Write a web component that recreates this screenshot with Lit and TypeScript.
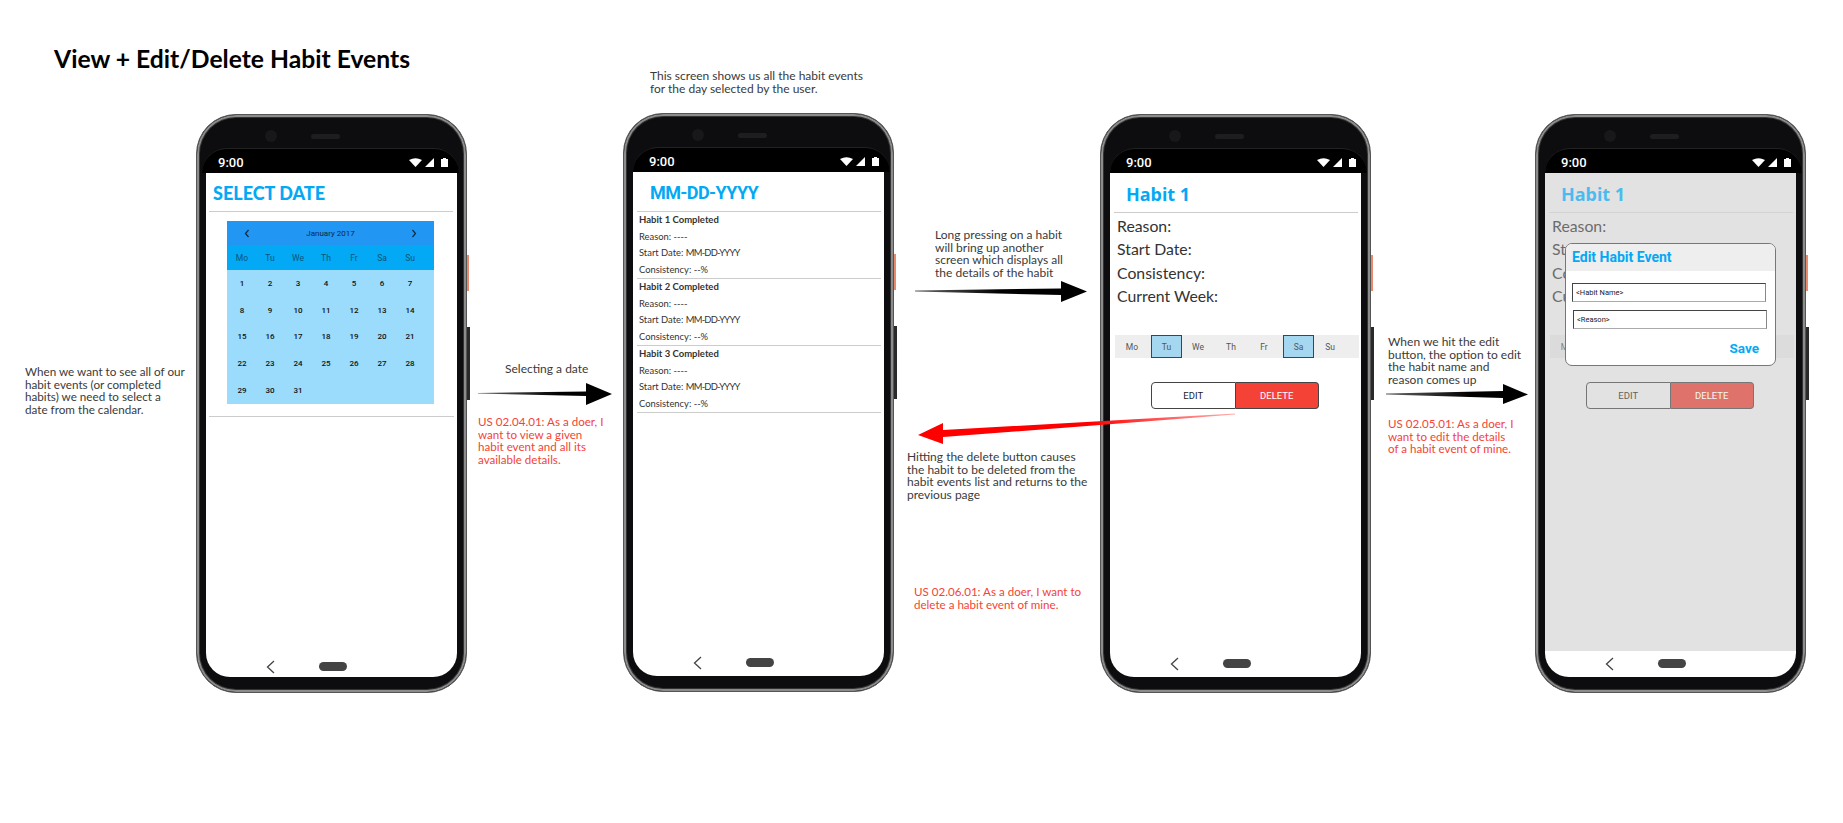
import { LitElement, html, css, svg } from "lit";
import { customElement, property } from "lit/decorators.js";

@customElement("phone-frame")
export class PhoneFrame extends LitElement {
  static override styles = css`
    :host {
      position: absolute;
      display: block;
      width: 271px;
      height: 579px;
    }
    .body {
      box-sizing: border-box;
      width: 100%;
      height: 100%;
      background: #0d0d0f;
      border: 1px solid #555;
      border-radius: 40px;
      box-shadow: inset 0 0 0 2px #8c8c8c, inset 0 0 0 3px #333;
      display: flex;
      flex-direction: column;
      overflow: hidden;
    }
    .sensors {
      height: 33px;
      flex: none;
      display: flex;
      align-items: flex-start;
      padding: 15px 0 0 68px;
      box-sizing: border-box;
    }
    .camera {
      width: 12px;
      height: 12px;
      border-radius: 50%;
      background: #18181b;
    }
    .speaker {
      width: 29px;
      height: 5px;
      margin: 4px 0 0 34px;
      border-radius: 3px;
      background: #1e1e21;
    }
    .status {
      width: 257px;
      height: 25px;
      flex: none;
      margin-left: 5px;
      background: #000;
      border-radius: 26px 26px 0 0;
      border-top: 1px solid #222;
      box-sizing: border-box;
      display: flex;
      align-items: center;
      padding: 2px 11px 0 16px;
      color: #fff;
      font: 500 13px Roboto, sans-serif;
    }
    .icons {
      margin-left: auto;
      display: flex;
      align-items: center;
      gap: 3px;
    }
    .battery {
      margin-left: 4px;
    }
    .screen {
      width: 251px;
      height: 504px;
      flex: none;
      margin-left: 9px;
      background: #fff;
      border-radius: 0 0 24px 24px;
      overflow: hidden;
      display: flex;
      flex-direction: column;
    }
    .shifted .status {
      margin-left: 9px;
    }
    .content {
      flex: 1;
      min-height: 0;
      position: relative;
      display: flex;
      flex-direction: column;
    }
    .nav {
      height: 26px;
      flex: none;
      display: flex;
      align-items: flex-start;
      padding: 11px 0 0 60px;
      box-sizing: border-box;
    }
    .shifted .nav {
      padding-top: 8px;
    }
    .pill {
      width: 28px;
      height: 9px;
      border-radius: 5px;
      background: #444;
      margin-left: 44px;
    }
    .chevron {
      margin-top: -2px;
    }
    .volume,
    .power {
      position: absolute;
      left: 271px;
    }
    .volume {
      top: 141px;
      width: 2px;
      height: 36px;
      background: #e98a6f;
    }
    .power {
      top: 213px;
      width: 3px;
      height: 73px;
      background: #2a2a2a;
    }
  `;

  @property({ type: Boolean }) shifted = false;

  override render() {
    return html`
      <div class="body ${this.shifted ? "shifted" : ""}">
        <div class="sensors">
          <span class="camera"></span><span class="speaker"></span>
        </div>
        <div class="status">
          9:00
          <div class="icons">
            <svg width="13" height="9" viewBox="0 0 13 9">
              <path d="M0 2Q6.5-1.6 13 2L6.5 9Z" fill="#fff" />
            </svg>
            <svg width="9" height="9" viewBox="0 0 9 9">
              <path d="M9 0V9H0Z" fill="#fff" />
            </svg>
            <svg class="battery" width="7" height="9" viewBox="0 0 7 9">
              <path d="M2 0H5V1H7V9H0V1H2Z" fill="#fff" />
            </svg>
          </div>
        </div>
        <div class="screen">
          <div class="content"><slot></slot></div>
          <div class="nav">
            <svg class="chevron" width="9" height="14" viewBox="0 0 9 14">
              <path d="M8 1L1.5 7L8 13" fill="none" stroke="#444" stroke-width="1.3" />
            </svg>
            <span class="pill"></span>
          </div>
        </div>
      </div>
      <span class="volume"></span><span class="power"></span>
    `;
  }
}

const WEEK = ["Mo", "Tu", "We", "Th", "Fr", "Sa", "Su"];
const DAYS = Array.from({ length: 31 }, (_, i) => i + 1);

const NOTES = [
  { x: 25, y: 365, cls: "tight", text: "When we want to see all of our\nhabit events (or completed\nhabits) we need to select a\ndate from the calendar." },
  { x: 650, y: 70, cls: "", text: "This screen shows us all the habit events\nfor the day selected by the user." },
  { x: 505, y: 363, cls: "", text: "Selecting a date" },
  { x: 478, y: 416, cls: "red", text: "US 02.04.01: As a doer, I\nwant to view a given\nhabit event and all its\navailable details." },
  { x: 935, y: 229, cls: "", text: "Long pressing on a habit\nwill bring up another\nscreen which displays all\nthe details of the habit" },
  { x: 907, y: 451, cls: "", text: "Hitting the delete button causes\nthe habit to be deleted from the\nhabit events list and returns to the\nprevious page" },
  { x: 914, y: 586, cls: "red", text: "US 02.06.01: As a doer, I want to\ndelete a habit event of mine." },
  { x: 1388, y: 336, cls: "", text: "When we hit the edit\nbutton, the option to edit\nthe habit name and\nreason comes up" },
  { x: 1388, y: 418, cls: "red", text: "US 02.05.01: As a doer, I\nwant to edit the details\nof a habit event of mine." },
];

const ARROWS = [
  { fill: "url(#ink1)", d: "M478 393L586 391.5V383L612 394L586 405V396L478 393.6Z" },
  { fill: "url(#ink2)", d: "M915 290.5L1061 288.5V281L1087 291.5L1061 302V295L915 291.5Z" },
  { fill: "url(#ink3)", d: "M1386 393.5L1503 391V384L1528 394.5L1503 404V398L1386 394.5Z" },
  { fill: "url(#ink4)", d: "M1235 413.5L943 430V423L918 435L943 444V437L1235 414.5Z" },
];

@customElement("app-root")
export class AppRoot extends LitElement {
  static override styles = css`
    :host {
      display: block;
      position: relative;
      width: 1843px;
      height: 823px;
      overflow: hidden;
      background: #fff;
      font-family: Lato, sans-serif;
      color: #333;
    }
    .heading {
      position: absolute;
      left: 54px;
      top: 46px;
      margin: 0;
      font: 700 24.7px/26px Lato, sans-serif;
      color: #000;
    }
    .note {
      position: absolute;
      margin: 0;
      font-size: 12px;
      line-height: 12.7px;
      white-space: pre;
      color: #3a3a3a;
    }
    .note.tight {
      font-size: 11.7px;
    }
    .note.red {
      font-size: 11.6px;
      color: #f44336;
    }
    .arrows {
      position: absolute;
      left: 0;
      top: 0;
      pointer-events: none;
    }
    .title {
      height: 37px;
      flex: none;
      margin: 0 3px 0 4px;
      border-bottom: 1px solid #ccc;
      display: flex;
      align-items: center;
      padding: 2px 0 0 13px;
      font: 700 18px Roboto, sans-serif;
      letter-spacing: -0.6px;
      color: #03a9f4;
    }
    .title.select {
      height: 36px;
      margin: 0 4px 0 3px;
      padding-left: 4px;
      font: 900 18px Lato, sans-serif;
      letter-spacing: 0;
    }
    .title.habit {
      padding-left: 12px;
      font: 700 18px "Noto Sans", sans-serif;
      letter-spacing: 0;
    }
    .calendar {
      width: 207px;
      margin: 9px 0 12px 21px;
      flex: none;
      background: #9bdcfd;
      font: 500 8px Roboto, sans-serif;
      color: #111;
    }
    .month {
      height: 24px;
      background: #2196f3;
      display: flex;
      align-items: center;
      justify-content: space-between;
      padding: 0 17px;
      color: #0d2b45;
      font-weight: 400;
    }
    .weekdays,
    .days {
      display: grid;
      grid-template-columns: repeat(7, 28px);
      justify-items: center;
      align-items: center;
      padding-left: 1px;
    }
    .weekdays {
      height: 25px;
      background: #03a9f4;
      color: #0c5378;
      font-size: 8.5px;
      font-weight: 400;
    }
    .days {
      grid-auto-rows: 26.8px;
      height: 134px;
      align-content: start;
    }
    .rule {
      margin: 0 3px;
      border-top: 1px solid #ccc;
    }
    .item {
      margin: 0 3px 0 4px;
      padding-left: 2px;
      border-bottom: 1px solid #ccc;
      font-size: 9.4px;
      line-height: 16.5px;
      color: #333;
    }
    .item b {
      display: block;
      font-weight: 700;
      font-size: 9.5px;
    }
    .item span {
      display: block;
    }
    .item .date {
      display: inline;
      letter-spacing: -0.75px;
    }
    .detail {
      display: flex;
      flex-direction: column;
      flex: 1;
    }
    .facts {
      padding: 1px 0 0 7px;
      font-size: 15.8px;
      line-height: 23.3px;
      color: #333;
    }
    .week {
      display: flex;
      width: 244px;
      height: 23px;
      margin: 28px 0 0 5px;
      background: #eee;
      font: 8.5px Roboto, sans-serif;
      color: #555;
    }
    .week span {
      width: 33px;
      padding-left: 1px;
      display: flex;
      align-items: center;
      justify-content: center;
      box-sizing: border-box;
    }
    .week .on {
      width: 31px;
      margin: 0 -1px 0 3px;
      padding-left: 0;
      background: #a5d8f0;
      box-shadow: inset 0 0 0 1px #37474f;
    }
    .actions {
      display: flex;
      width: 168px;
      height: 27px;
      margin: 24px 0 0 41px;
      font: 9.5px Roboto, sans-serif;
    }
    .actions span {
      flex: 1;
      display: flex;
      align-items: center;
      justify-content: center;
      box-sizing: border-box;
      border: 1px solid #444;
    }
    .edit {
      border-radius: 4px 0 0 4px;
      color: #222;
      background: #fff;
    }
    .actions .delete {
      border-radius: 0 4px 4px 0;
      border-left: 0;
      background: #f44336;
      color: #fff;
    }
    .modal {
      background: #e2e2e2;
      position: relative;
      flex: 1;
      display: flex;
      flex-direction: column;
    }
    .modal .detail {
      opacity: 0.68;
    }
    .modal .edit {
      background: transparent;
    }
    .modal .week {
      background: #d8d8d8;
    }
    .modal .actions .delete {
      background: #df4035;
    }
    .dialog {
      position: absolute;
      left: 20px;
      top: 70px;
      width: 211px;
      height: 123px;
      box-sizing: border-box;
      background: #fff;
      border: 1px solid #777;
      border-radius: 7px;
      overflow: hidden;
    }
    .dialog h3 {
      margin: 0;
      height: 27px;
      padding: 0 0 0 6px;
      background: #eee;
      font: 700 14px/27px Roboto, sans-serif;
      color: #03a9f4;
    }
    .field {
      height: 19px;
      box-sizing: border-box;
      margin: 12px 9px 0 6px;
      border: 1px solid #444;
      border-bottom-color: #aaa;
      border-right-color: #888;
      padding-left: 3px;
      font: 7.5px/17px Roboto, sans-serif;
      color: #222;
    }
    .field + .field {
      margin: 8px 8px 0 7px;
    }
    .save {
      text-align: right;
      margin: 11px 16px 0 0;
      font: 700 13.5px Roboto, sans-serif;
      color: #03a9f4;
    }
  `;

  private detail() {
    return html`
      <div class="detail">
        <div class="title habit">Habit 1</div>
        <div class="facts">
          <div>Reason:</div>
          <div>Start Date:</div>
          <div>Consistency:</div>
          <div>Current Week:</div>
        </div>
        <div class="week">
          ${WEEK.map((d) => html`<span class=${d === "Tu" || d === "Sa" ? "on" : ""}>${d}</span>`)}
        </div>
        <div class="actions">
          <span class="edit">EDIT</span><span class="delete">DELETE</span>
        </div>
      </div>
    `;
  }

  override render() {
    return html`
      <h1 class="heading">View + Edit/Delete Habit Events</h1>

      <phone-frame style="left:196px;top:114px">
        <div class="title select">SELECT DATE</div>
        <div class="calendar">
          <div class="month">
            <svg width="6" height="9" viewBox="0 0 6 9">
              <path d="M4.5 1L1.5 4.5L4.5 8" fill="none" stroke="#0d2b45" stroke-width="1.2" />
            </svg>
            <span>January 2017</span>
            <svg width="6" height="9" viewBox="0 0 6 9">
              <path d="M1.5 1L4.5 4.5L1.5 8" fill="none" stroke="#0d2b45" stroke-width="1.2" />
            </svg>
          </div>
          <div class="weekdays">${WEEK.map((d) => html`<span>${d}</span>`)}</div>
          <div class="days">${DAYS.map((d) => html`<span>${d}</span>`)}</div>
        </div>
        <div class="rule"></div>
      </phone-frame>

      <phone-frame shifted style="left:623px;top:113px">
        <div class="title">MM-DD-YYYY</div>
        ${[1, 2, 3].map(
          (n) => html`
            <div class="item">
              <b>Habit ${n} Completed</b>
              <span>Reason: ----</span>
              <span>Start Date: <span class="date">MM-DD-YYYY</span></span>
              <span>Consistency: --%</span>
            </div>
          `
        )}
      </phone-frame>

      <phone-frame shifted style="left:1100px;top:114px">${this.detail()}</phone-frame>

      <phone-frame shifted style="left:1535px;top:114px">
        <div class="modal">
          ${this.detail()}
          <div class="dialog">
            <h3>Edit Habit Event</h3>
            <div class="field">&lt;Habit Name&gt;</div>
            <div class="field">&lt;Reason&gt;</div>
            <div class="save">Save</div>
          </div>
        </div>
      </phone-frame>

      ${NOTES.map(
        (n) => html`<p class="note ${n.cls}" style="left:${n.x}px;top:${n.y}px">${n.text}</p>`
      )}

      <svg class="arrows" width="1843" height="823">
        <defs>
          <linearGradient id="ink1" gradientUnits="userSpaceOnUse" x1="478" y1="0" x2="560" y2="0">
            <stop offset="0" stop-color="#666" /><stop offset="1" stop-color="#000" />
          </linearGradient>
          <linearGradient id="ink2" gradientUnits="userSpaceOnUse" x1="915" y1="0" x2="1000" y2="0">
            <stop offset="0" stop-color="#666" /><stop offset="1" stop-color="#000" />
          </linearGradient>
          <linearGradient id="ink3" gradientUnits="userSpaceOnUse" x1="1386" y1="0" x2="1470" y2="0">
            <stop offset="0" stop-color="#666" /><stop offset="1" stop-color="#000" />
          </linearGradient>
          <linearGradient id="ink4" gradientUnits="userSpaceOnUse" x1="1235" y1="0" x2="1090" y2="0">
            <stop offset="0" stop-color="#ffb0b0" /><stop offset="1" stop-color="#f00" />
          </linearGradient>
        </defs>
        ${ARROWS.map((a) => svg`<path d=${a.d} fill=${a.fill} />`)}
      </svg>
    `;
  }
}
